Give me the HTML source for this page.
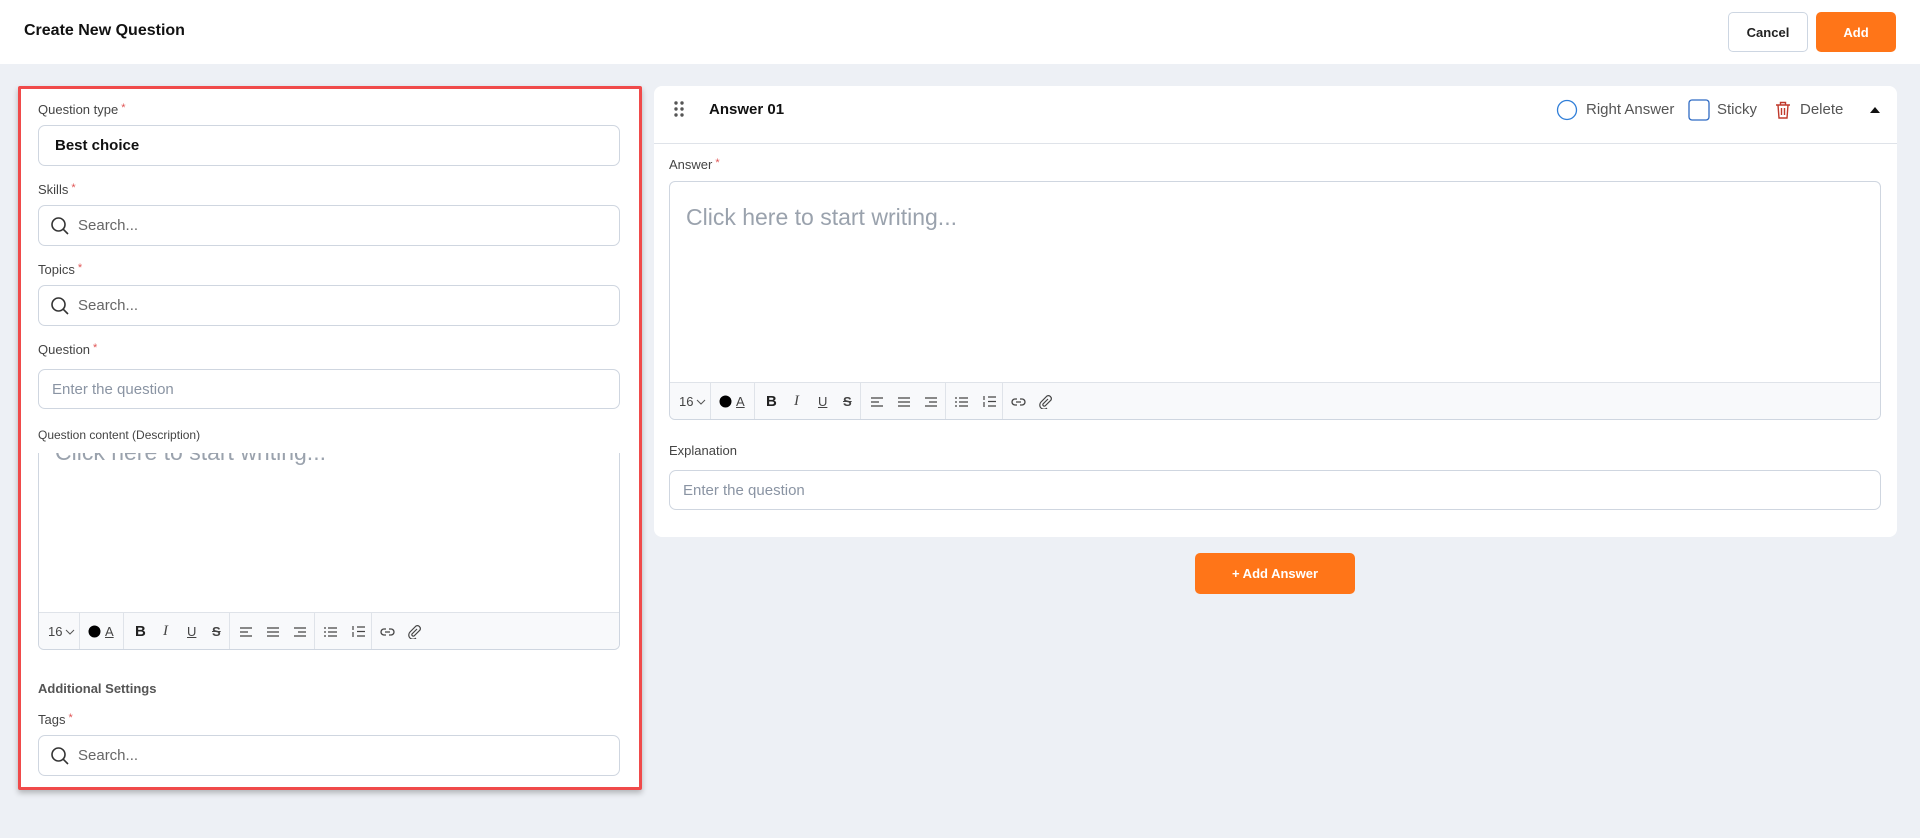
<!DOCTYPE html>
<html><head><meta charset="utf-8"><style>
*{box-sizing:border-box;margin:0;padding:0}
body{width:1920px;height:838px;background:#edf0f5;font-family:"Liberation Sans",sans-serif;position:relative;overflow:hidden;color:#111}
.abs{position:absolute}
.hdr{left:0;top:0;width:1920px;height:64px;background:#fff}
.title{left:24px;top:22px;font-size:16px;font-weight:bold;color:#111}
.btn{border-radius:5px;font-size:13px;font-weight:bold;display:flex;align-items:center;justify-content:center}
.card{background:#fff;border-radius:8px}
.lbl{font-size:13px;color:#444}
.lbl i{color:#e05555;font-style:normal;font-size:11px;vertical-align:top;margin-left:3px}
.inp{border:1px solid #cfd6e0;border-radius:7px;background:#fff;display:flex;align-items:center;font-size:15px}
.ph{color:#8a94a3}
.srch svg{margin:0 8px 0 11px}
.ed{border:1px solid #cfd6e0;border-radius:4px;overflow:hidden;background:#fff}
.tb{position:absolute;left:0;right:0;bottom:0;height:37px;background:#f8f9fb;border-top:1px solid #dfe3e9}
.tb span{position:absolute;top:0;height:37px;display:flex;align-items:center;font-size:13px;color:#444}
.tb .d{width:1px;background:#dfe3e9;height:36px}
</style></head><body>
<div class="abs hdr"></div>
<div class="abs title">Create New Question</div>
<div class="abs btn" style="left:1728px;top:12px;width:80px;height:40px;border:1px solid #cdd6e2;background:#fff;color:#222">Cancel</div>
<div class="abs btn" style="left:1816px;top:12px;width:80px;height:40px;background:#ff7518;color:#fff">Add</div>

<div class="abs card" style="left:18px;top:86px;width:624px;height:704px;border:3px solid #f04a4a;border-radius:2px;box-shadow:0 3px 6px rgba(0,0,0,.25)"></div>
<div class="abs lbl" style="left:38px;top:102px">Question type<i>*</i></div>
<div class="abs inp" style="left:38px;top:125px;width:582px;height:41px;padding-left:16px;font-weight:bold;color:#111">Best choice</div>
<div class="abs lbl" style="left:38px;top:182px">Skills<i>*</i></div>
<div class="abs inp srch" style="left:38px;top:205px;width:582px;height:41px"><svg width="20" height="20" viewBox="0 0 20 20" fill="none" stroke="#333" stroke-width="1.6"><circle cx="8.5" cy="8.5" r="6.5"/><path d="M13.3 13.3L18 18"/></svg><span class="ph" style="color:#666">Search...</span></div>
<div class="abs lbl" style="left:38px;top:262px">Topics<i>*</i></div>
<div class="abs inp srch" style="left:38px;top:285px;width:582px;height:41px"><svg width="20" height="20" viewBox="0 0 20 20" fill="none" stroke="#333" stroke-width="1.6"><circle cx="8.5" cy="8.5" r="6.5"/><path d="M13.3 13.3L18 18"/></svg><span class="ph" style="color:#666">Search...</span></div>
<div class="abs lbl" style="left:38px;top:342px">Question<i>*</i></div>
<div class="abs inp" style="left:38px;top:369px;width:582px;height:40px;padding-left:13px;font-size:15px"><span class="ph">Enter the question</span></div>
<div class="abs lbl" style="left:38px;top:428px;font-size:12px">Question content (Description)</div>
<div class="abs ed" style="left:38px;top:453px;width:582px;height:197px;border-top:none;border-radius:0 0 6px 6px">
 <div class="abs ph" style="left:16px;top:-14px;font-size:23px;color:#9aa2ad">Click here to start writing...</div>
 <div class="tb">
  <span style="left:9px">16 <svg width="10" height="8" viewBox="0 0 10 8" style="margin-left:3px"><path d="M1 2l4 4 4-4" fill="none" stroke="#555"/></svg></span>
  <span class="d" style="left:40px"></span>
  <span style="left:49px"><svg width="13" height="13"><circle cx="6.5" cy="6.5" r="6" fill="#000"/></svg></span>
  <span style="left:66px;text-decoration:underline">A</span>
  <span class="d" style="left:84px"></span>
  <span style="left:96px;font-weight:bold;font-size:15px;color:#222">B</span>
  <span style="left:124px;font-style:italic;font-family:'Liberation Serif';font-size:15px">I</span>
  <span style="left:148px;text-decoration:underline">U</span>
  <span style="left:173px;text-decoration:line-through;font-weight:bold">S</span>
  <span class="d" style="left:190px"></span>
  <span style="left:200px"><svg width="14" height="12" stroke="#444" stroke-width="1.2"><path d="M1 2h12M1 6h8M1 10h12"/></svg></span>
  <span style="left:227px"><svg width="14" height="12" stroke="#444" stroke-width="1.2"><path d="M1 2h12M1 6h12M1 10h12"/></svg></span>
  <span style="left:254px"><svg width="14" height="12" stroke="#444" stroke-width="1.2"><path d="M1 2h12M5 6h8M1 10h12"/></svg></span>
  <span class="d" style="left:275px"></span>
  <span style="left:284px"><svg width="15" height="12" stroke="#444" stroke-width="1.2"><path d="M1 2h2M5 2h9M1 6h2M5 6h9M1 10h2M5 10h9"/></svg></span>
  <span style="left:312px"><svg width="15" height="13" stroke="#444" stroke-width="1.2"><path d="M2 1v4M2 7v5M6 2h8M6 6.5h8M6 11h8"/></svg></span>
  <span class="d" style="left:332px"></span>
  <span style="left:341px"><svg width="15" height="10" fill="none" stroke="#444" stroke-width="1.3"><path d="M6 2H4a3 3 0 000 6h2M9 2h2a3 3 0 010 6H9M5 5h5"/></svg></span>
  <span style="left:368px"><svg width="14" height="15" fill="none" stroke="#444" stroke-width="1.2"><path d="M10 5l-5 5a1.5 1.5 0 002 2l6-6a3 3 0 00-4-4L3 8a4 4 0 006 6"/></svg></span>
 </div>
</div>
<div class="abs" style="left:38px;top:681px;font-size:13px;font-weight:bold;color:#555">Additional Settings</div>
<div class="abs lbl" style="left:38px;top:712px">Tags<i>*</i></div>
<div class="abs inp srch" style="left:38px;top:735px;width:582px;height:41px"><svg width="20" height="20" viewBox="0 0 20 20" fill="none" stroke="#333" stroke-width="1.6"><circle cx="8.5" cy="8.5" r="6.5"/><path d="M13.3 13.3L18 18"/></svg><span class="ph" style="color:#666">Search...</span></div>

<div class="abs card" style="left:654px;top:86px;width:1243px;height:451px"></div>
<div class="abs" style="left:654px;top:143px;width:1243px;height:1px;background:#dfe3e9"></div>
<svg class="abs" style="left:673px;top:100px" width="12" height="18"><g fill="#555"><circle cx="3" cy="3" r="1.7"/><circle cx="9" cy="3" r="1.7"/><circle cx="3" cy="9" r="1.7"/><circle cx="9" cy="9" r="1.7"/><circle cx="3" cy="15" r="1.7"/><circle cx="9" cy="15" r="1.7"/></g></svg>
<div class="abs" style="left:709px;top:101px;font-size:15px;font-weight:bold">Answer 01</div>
<svg class="abs" style="left:1556px;top:99px" width="22" height="22"><circle cx="11" cy="11" r="9.5" fill="none" stroke="#2f7ed8" stroke-width="1.3"/></svg>
<div class="abs" style="left:1586px;top:101px;font-size:15px;color:#555">Right Answer</div>
<svg class="abs" style="left:1688px;top:99px" width="22" height="22"><rect x="1" y="1" width="20" height="20" rx="3" fill="none" stroke="#2f6bc4" stroke-width="1.3"/></svg>
<div class="abs" style="left:1717px;top:101px;font-size:15px;color:#555">Sticky</div>
<svg class="abs" style="left:1775px;top:101px" width="16" height="18" fill="none" stroke="#c0392b" stroke-width="1.4"><path d="M1 4h14M5.5 4V1.5h5V4M3 4l1 13h8l1-13M6.5 7v7M9.5 7v7"/></svg>
<div class="abs" style="left:1800px;top:101px;font-size:15px;color:#555">Delete</div>
<svg class="abs" style="left:1870px;top:106px" width="10" height="7"><path d="M0 7L5 1l5 6z" fill="#111"/></svg>
<div class="abs lbl" style="left:669px;top:157px">Answer<i>*</i></div>
<div class="abs ed" style="left:669px;top:181px;width:1212px;height:239px;border-radius:6px">
 <div class="abs ph" style="left:16px;top:22px;font-size:23px;color:#9aa2ad">Click here to start writing...</div>
 <div class="tb">
  <span style="left:9px">16 <svg width="10" height="8" viewBox="0 0 10 8" style="margin-left:3px"><path d="M1 2l4 4 4-4" fill="none" stroke="#555"/></svg></span>
  <span class="d" style="left:40px"></span>
  <span style="left:49px"><svg width="13" height="13"><circle cx="6.5" cy="6.5" r="6" fill="#000"/></svg></span>
  <span style="left:66px;text-decoration:underline">A</span>
  <span class="d" style="left:84px"></span>
  <span style="left:96px;font-weight:bold;font-size:15px;color:#222">B</span>
  <span style="left:124px;font-style:italic;font-family:'Liberation Serif';font-size:15px">I</span>
  <span style="left:148px;text-decoration:underline">U</span>
  <span style="left:173px;text-decoration:line-through;font-weight:bold">S</span>
  <span class="d" style="left:190px"></span>
  <span style="left:200px"><svg width="14" height="12" stroke="#444" stroke-width="1.2"><path d="M1 2h12M1 6h8M1 10h12"/></svg></span>
  <span style="left:227px"><svg width="14" height="12" stroke="#444" stroke-width="1.2"><path d="M1 2h12M1 6h12M1 10h12"/></svg></span>
  <span style="left:254px"><svg width="14" height="12" stroke="#444" stroke-width="1.2"><path d="M1 2h12M5 6h8M1 10h12"/></svg></span>
  <span class="d" style="left:275px"></span>
  <span style="left:284px"><svg width="15" height="12" stroke="#444" stroke-width="1.2"><path d="M1 2h2M5 2h9M1 6h2M5 6h9M1 10h2M5 10h9"/></svg></span>
  <span style="left:312px"><svg width="15" height="13" stroke="#444" stroke-width="1.2"><path d="M2 1v4M2 7v5M6 2h8M6 6.5h8M6 11h8"/></svg></span>
  <span class="d" style="left:332px"></span>
  <span style="left:341px"><svg width="15" height="10" fill="none" stroke="#444" stroke-width="1.3"><path d="M6 2H4a3 3 0 000 6h2M9 2h2a3 3 0 010 6H9M5 5h5"/></svg></span>
  <span style="left:368px"><svg width="14" height="15" fill="none" stroke="#444" stroke-width="1.2"><path d="M10 5l-5 5a1.5 1.5 0 002 2l6-6a3 3 0 00-4-4L3 8a4 4 0 006 6"/></svg></span>
 </div>
</div>
<div class="abs lbl" style="left:669px;top:443px">Explanation</div>
<div class="abs inp" style="left:669px;top:470px;width:1212px;height:40px;padding-left:13px"><span class="ph">Enter the question</span></div>
<div class="abs btn" style="left:1195px;top:553px;width:160px;height:41px;background:#ff7518;color:#fff;font-size:13px">+ Add Answer</div>
</body></html>
